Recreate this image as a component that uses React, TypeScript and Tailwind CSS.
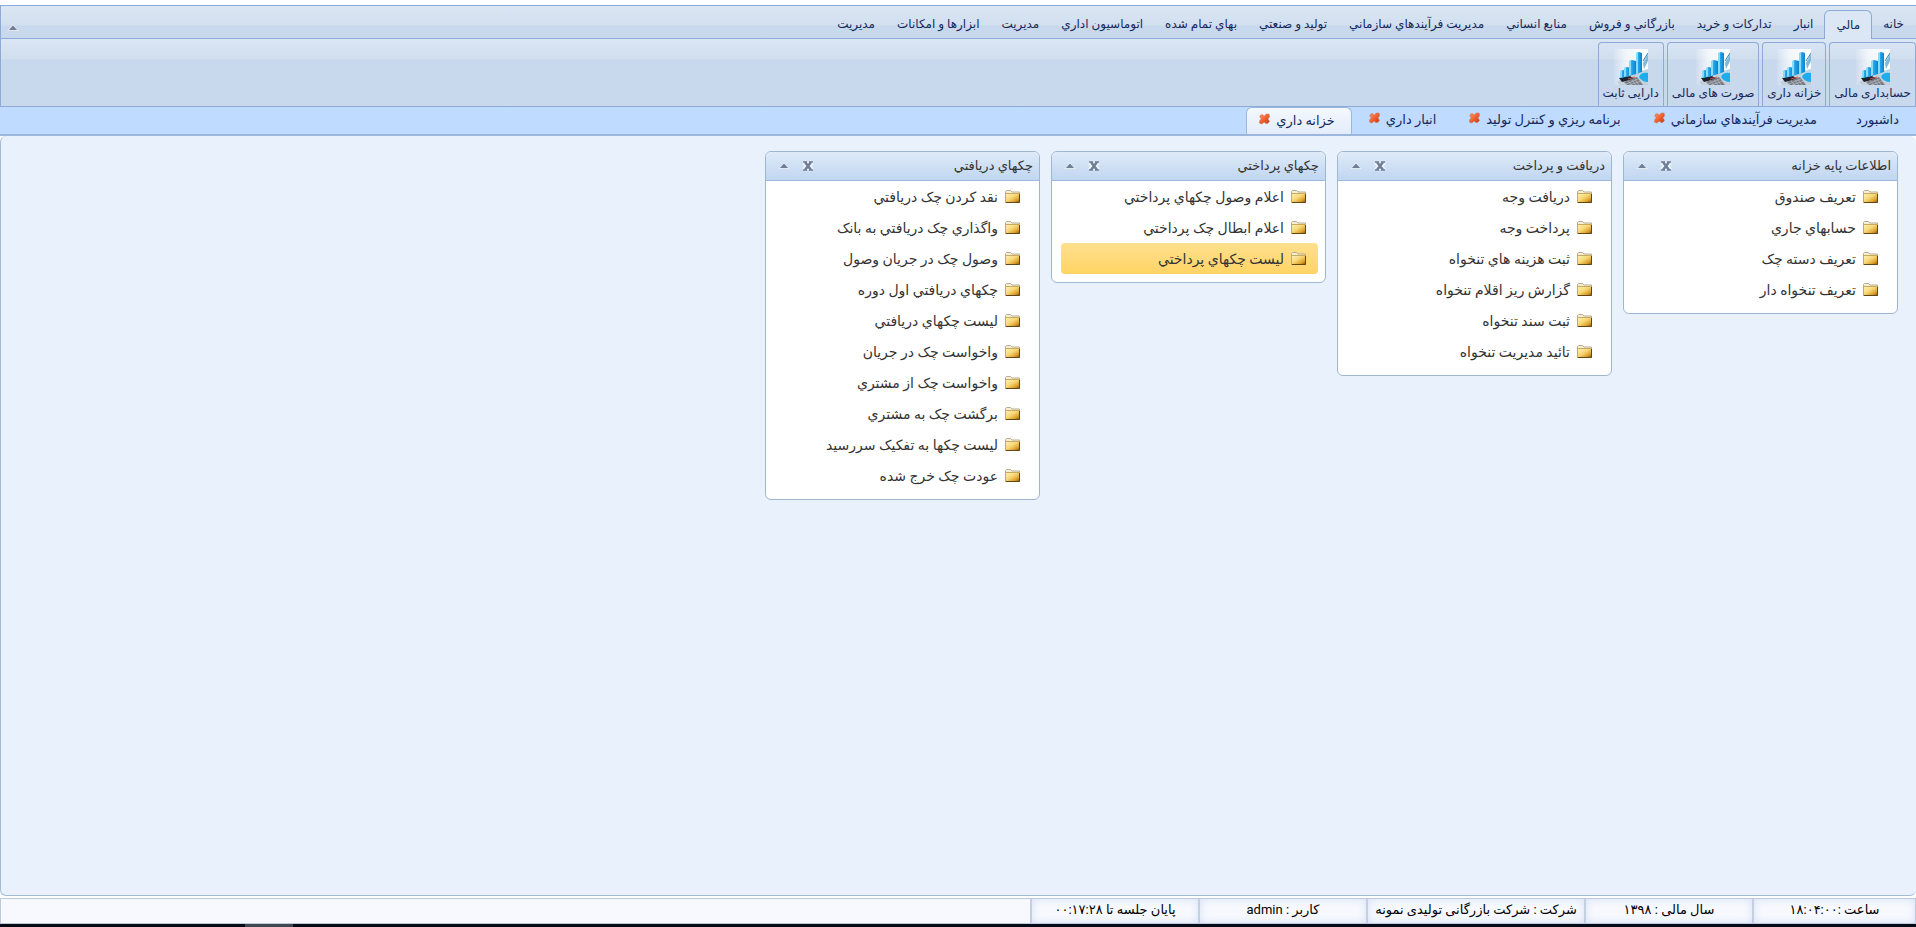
import React from "react";

const menuItems = [
  "خانه",
  "مالي",
  "انبار",
  "تدارکات و خريد",
  "بازرگاني و فروش",
  "منابع انساني",
  "مديريت فرآيندهاي سازماني",
  "توليد و صنعتي",
  "بهاي تمام شده",
  "اتوماسيون اداري",
  "مديريت",
  "ابزارها و امکانات",
  "مديريت",
];

const ribbonItems = ["حسابداری مالی", "خزانه داری", "صورت های مالی", "دارایی ثابت"];

const docTabs = [
  { title: "مديريت فرآيندهاي سازماني", active: false },
  { title: "برنامه ريزي و کنترل توليد", active: false },
  { title: "انبار داري", active: false },
  { title: "خزانه داري", active: true },
];

const panels = [
  {
    title: "اطلاعات پايه خزانه",
    items: ["تعريف صندوق", "حسابهاي جاري", "تعريف دسته چک", "تعريف تنخواه دار"],
  },
  {
    title: "دريافت و پرداخت",
    items: [
      "دريافت وجه",
      "پرداخت وجه",
      "ثبت هزينه هاي تنخواه",
      "گزارش ريز اقلام تنخواه",
      "ثبت سند تنخواه",
      "تائيد مديريت تنخواه",
    ],
  },
  {
    title: "چکهاي پرداختي",
    selected: 2,
    items: ["اعلام وصول چکهاي پرداختي", "اعلام ابطال چک پرداختي", "ليست چکهاي پرداختي"],
  },
  {
    title: "چکهاي دريافتي",
    items: [
      "نقد کردن چک دريافتي",
      "واگذاري چک دريافتي به بانک",
      "وصول چک در جريان وصول",
      "چکهاي دريافتي اول دوره",
      "ليست چکهاي دريافتي",
      "واخواست چک در جريان",
      "واخواست چک از مشتري",
      "برگشت چک به مشتري",
      "ليست چکها به تفکيک سررسيد",
      "عودت چک خرج شده",
    ],
  },
];

const statusItems = [
  { text: "ساعت :۱۸:۰۴:۰۰", width: "w-[163px]" },
  { text: "سال مالی : ۱۳۹۸", width: "w-[168px]" },
  { text: "شرکت : شرکت بازرگانی تولیدی نمونه", width: "w-[218px]" },
  { text: "کاربر : admin", width: "w-[168px]" },
  { text: "پایان جلسه تا ۰۰:۱۷:۲۸", width: "w-[168px]" },
];

function ChartIcon() {
  return (
    <svg width="34" height="36" viewBox="0 0 34 36" aria-hidden="true">
      <defs>
        <linearGradient id="chartBg" x1="0" y1="0" x2="1" y2="0">
          <stop offset="0" stopColor="#fff" stopOpacity="0.1" />
          <stop offset="0.35" stopColor="#fff" stopOpacity="0.7" />
          <stop offset="1" stopColor="#fff" />
        </linearGradient>
        <linearGradient id="chartBar" x1="0" y1="0" x2="1" y2="0">
          <stop offset="0" stopColor="#5cc6f3" />
          <stop offset="0.5" stopColor="#1b9fe8" />
          <stop offset="1" stopColor="#1280cb" />
        </linearGradient>
      </defs>
      <rect width="34" height="36" fill="url(#chartBg)" />
      <path d="M3 33 14 26 34 20V36H5Z" fill="#c3d0db" />
      <path d="M5 29 16 27 20 30 8 33Z" fill="#1f222b" />
      <path d="M10 33 23 28 29 36H13Z" fill="#777c85" />
      <path d="m12 35 12-5M15 36l12-4M14 32l4 4M18 31l4 5M21 30l4 6" stroke="#b9bcc2" strokeWidth="0.7" />
      <path d="m14 30 7-2" stroke="#d6504c" strokeWidth="1" />
      <path d="M6 22 9 21 12 22V28L6 29Z" fill="url(#chartBar)" />
      <path d="M10 19 13 18 17 19V27L10 28Z" fill="url(#chartBar)" />
      <path d="M15 12 18 11 22 12V25L15 27Z" fill="url(#chartBar)" />
      <path d="M22 4 25 3 28 4V23L22 25Z" fill="url(#chartBar)" />
      <path d="M6 22H8V28L6 29ZM10 19H12V27L10 28ZM15 12H17V26L15 27ZM22 4H24V24L22 25Z" fill="#8adaf9" />
      <path d="M29 14 34 5V12L30 20Z" fill="#7fb9da" />
      <path d="m29 12 5-8" stroke="#3c83ad" strokeWidth="1" />
      <path d="M22 27 28 23 34 21V25L25 29Z" fill="#b4d9ea" />
      <path d="M25 28Q27 23 34 24V33Q28 33 25 28Z" fill="#1facec" />
    </svg>
  );
}

function FolderIcon() {
  return (
    <svg width="15" height="13" viewBox="0 0 15 13" className="shrink-0" aria-hidden="true">
      <defs>
        <linearGradient id="folderFill" x1="0" y1="0" x2="1" y2="1">
          <stop offset="0" stopColor="#fff3b8" />
          <stop offset="0.45" stopColor="#f7d777" />
          <stop offset="0.75" stopColor="#e0a22c" />
          <stop offset="1" stopColor="#85540a" />
        </linearGradient>
      </defs>
      <path d="M0.5 11.5V1.5L1.5 0.5H5.5L7 2H14.5V5H0.5" fill="#f5eed9" stroke="#b7ab8d" />
      <rect x="0.5" y="3.5" width="14" height="9" fill="url(#folderFill)" stroke="#c9a95c" />
      <path d="M14.5 4V12.5H1" fill="none" stroke="#5f4718" />
    </svg>
  );
}

function CloseMark() {
  return (
    <svg width="11" height="12" viewBox="0 0 12 12" aria-hidden="true">
      <defs>
        <linearGradient id="closeFill" x1="0" y1="0" x2="1" y2="1">
          <stop offset="0" stopColor="#ff9a6c" />
          <stop offset="0.5" stopColor="#f2622f" />
          <stop offset="1" stopColor="#b93a12" />
        </linearGradient>
      </defs>
      <path
        d="M1.5 2 3.5 1.2 5.6 3 8 0.6 11 0.8 11.4 3.6 9.6 6 11.4 8.4 9.8 10.6 7.5 10.8 5.6 9.2 3 11.4 0.6 10.4 0.8 8 2.6 5.8 1 4Z"
        fill="url(#closeFill)"
        stroke="#d45a33"
        strokeWidth="0.6"
      />
    </svg>
  );
}

function ArrowUp() {
  return (
    <svg width="12" height="8" viewBox="0 0 12 8" aria-hidden="true">
      <path d="M6 1 11 6.5H1Z" fill="#6f7f96" stroke="#fff" strokeOpacity="0.7" />
    </svg>
  );
}

function PanelClose() {
  return (
    <svg width="12" height="12" viewBox="0 0 12 12" aria-hidden="true">
      <path d="M2 2 10 10M10 2 2 10" stroke="#fff" strokeOpacity="0.7" strokeWidth="5" />
      <path d="M3 2 9 10M9 2 3 10" stroke="#6f7f96" strokeWidth="2.6" />
      <path d="M1 2H5M7 2H11M1 10H5M7 10H11" stroke="#6f7f96" strokeWidth="1.4" />
    </svg>
  );
}

export default function App() {
  return (
    <div
      dir="rtl"
      className="flex min-h-screen flex-col bg-white pt-[5px] font-[Roboto,'DejaVu_Sans',sans-serif] text-xs text-[#15285c]"
    >
      {/* Main menu */}
      <nav className="flex h-[34px] items-end border border-[#8dabd6] border-r-0 bg-linear-to-b from-[#dae6f4] from-0% via-[#d2dfee] via-60% to-[#c8d8ed] to-62%">
        <ul className="flex grow items-end pr-px">
          {menuItems.map((item, i) => (
            <li key={i}>
              <a
                href="#"
                className={
                  i === 1
                    ? "-mb-px flex h-[29px] items-center rounded-t-md border border-b-0 border-[#8dabd6] bg-[#dbe7f5] px-[11px]"
                    : "flex h-7 items-center px-[11px]"
                }
              >
                {item}
              </a>
            </li>
          ))}
        </ul>
        <button className="mb-1.5 ml-1.5" aria-label="بستن نوار">
          <ArrowUp />
        </button>
      </nav>

      {/* Ribbon */}
      <div className="flex h-[68px] items-end gap-[3px] border-b border-l border-[#8dabd6] bg-linear-to-b from-[#dae6f4] from-0% via-[#d0deee] via-30% to-[#c8d8ed] to-31%">
        {ribbonItems.map((item) => (
          <button
            key={item}
            className="flex h-16 flex-col items-center rounded-t-sm border border-b-0 border-[#8dabd6] px-1 pt-1.5"
          >
            <ChartIcon />
            <span className="leading-4">{item}</span>
          </button>
        ))}
      </div>

      {/* Open documents */}
      <div className="flex h-[29px] items-end border-b-2 border-[#9bb7dd] bg-[#bfdbff] pr-[5px] text-[13px] leading-[26px]">
        <a href="#" className="h-[27px] pr-3 pl-[18px]">
          داشبورد
        </a>
        {docTabs.map((tab) => (
          <div
            key={tab.title}
            className={
              tab.active
                ? "mr-[5px] flex h-[27px] items-start gap-1.5 rounded-t-md border border-b-0 border-[#9bb7dd] bg-linear-to-b from-[#f4f8fe] to-[#e3edfa] pr-4 pl-3"
                : "mr-[5px] flex h-[27px] items-start gap-1.5 pr-4 pl-3"
            }
          >
            <a href="#">{tab.title}</a>
            <button className="pt-[5px]" aria-label="بستن">
              <CloseMark />
            </button>
          </div>
        ))}
      </div>

      {/* Workspace */}
      <main className="flex grow items-start gap-[11px] rounded-md border border-t-0 border-r-0 border-[#a3bcd6] bg-[#e9f1fd] pt-[15px] pr-[18px]">
        {panels.map((panel) => (
          <section
            key={panel.title}
            className="w-[275px] rounded-md border border-[#9fb6d0] bg-white pb-2 text-[#333]"
          >
            <header className="flex h-[29px] items-center gap-3 rounded-t-md border-b border-[#9cb8dc] bg-linear-to-b from-[#dfeaf8] to-[#c0d6f1] pr-1.5 pl-3">
              <h2 className="grow text-[13px]">{panel.title}</h2>
              <button aria-label="بستن">
                <PanelClose />
              </button>
              <button aria-label="جمع کردن">
                <ArrowUp />
              </button>
            </header>
            <ul className="pr-[7px] pl-[9px] text-sm">
              {panel.items.map((item, i) => (
                <li key={item}>
                  <a
                    href="#"
                    className={
                      i === panel.selected
                        ? "flex h-[31px] items-center gap-[7px] rounded bg-linear-to-b from-[#ffe08d] to-[#ffd464] pr-3"
                        : "flex h-[31px] items-center gap-[7px] pr-3"
                    }
                  >
                    <FolderIcon />
                    {item}
                  </a>
                </li>
              ))}
            </ul>
          </section>
        ))}
      </main>

      {/* Status bar */}
      <footer className="mt-0.5 flex h-[26px] border border-[#bccadb] bg-[#f7f9fe] text-[13px] leading-[22px] text-black">
        {statusItems.map((item) => (
          <div
            key={item.text}
            className={`flex items-start justify-center border-l-2 border-[#c3d0e0] whitespace-nowrap shadow-[inset_0_0_8px_#d5dff5] ${item.width}`}
          >
            {item.text}
          </div>
        ))}
      </footer>
      <div className="flex h-[3px] bg-[#060b16]">
        <div className="mr-auto ml-[245px] w-12 bg-[#414750]" />
      </div>
    </div>
  );
}
